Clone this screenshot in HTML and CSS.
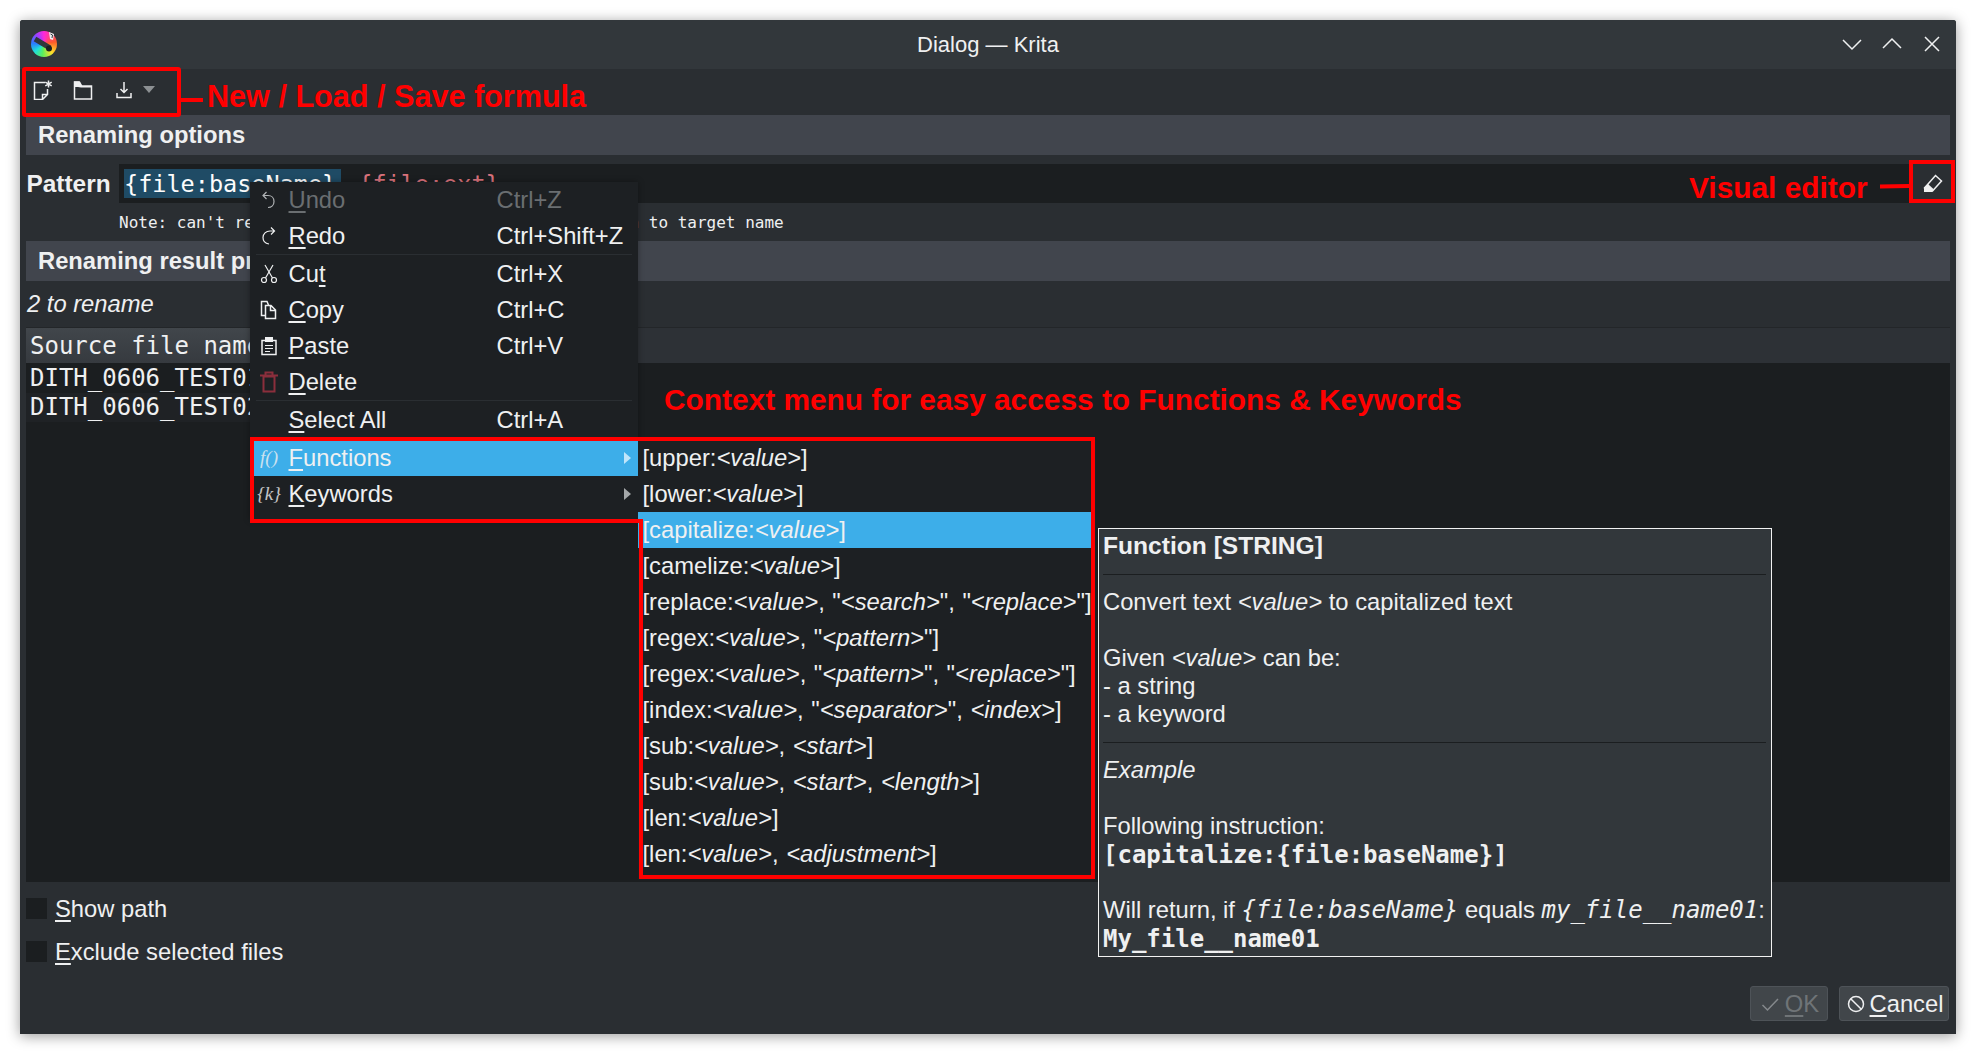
FILE: index.html
```html
<!DOCTYPE html>
<html lang="en">
<head>
    <meta charset="UTF-8">
    <title>Dialog — Krita</title>
    <link rel="stylesheet" href="styles.css">
</head>
<body>
    <div class="window">
        <div class="titlebar">
            <div class="logo">
                <svg width="26" height="26" viewBox="0 0 26 26"><path d="M4 8l15 9" stroke="#31363b" stroke-width="5" fill="none"/><circle cx="18" cy="17.500" r="3" fill="#1b1e20"/><path d="M18 1l5 2-1 6-3-1z" fill="#eff0f1"/><path d="M19.500 3l2 1-.5 3" stroke="#31363b" fill="none"/></svg>
            </div>
            <div class="title">Dialog — Krita</div>
            <div class="win-buttons">
                <svg width="20" height="20" viewBox="0 0 20 20"><path d="M1 6l9 9 9-9" class="win-icon"/></svg>
                <svg width="20" height="20" viewBox="0 0 20 20"><path d="M1 14l9-9 9 9" class="win-icon"/></svg>
                <svg width="20" height="20" viewBox="0 0 20 20"><path d="M3 3l14 14M17 3L3 17" class="win-icon"/></svg>
            </div>
        </div>

        <div class="toolbar">
            <svg class="tool-new" width="20" height="20" viewBox="0 0 20 20"><path d="M12 2.500H1.500v17h8l5-5V9M9.500 19.500v-5h5" class="tool-icon"/><path d="M15.500 0.500v7M12.300 2.200l6.400 3.600M18.700 2.200l-6.400 3.600" class="tool-icon"/></svg>
            <svg class="tool-open" width="20" height="20" viewBox="0 0 20 20"><path d="M1.500 2v17h17V6H8L6 2z" class="tool-icon"/><path d="M1 1.500h6l2.500 4.500 9.500 0v1.500H8L5 7H1z" fill="#eff0f1"/></svg>
            <svg class="tool-save" width="16" height="18" viewBox="0 0 16 18"><path d="M8 1v10M4.500 8l3.500 3.500L11.500 8M1 12v4.500h14V12" class="tool-icon"/></svg>
            <span class="tool-caret"></span>
        </div>

        <div class="section">Renaming options</div>

        <div class="pattern-row">
            <span class="pattern-label">Pattern</span>
            <div class="pattern-field">
                <span class="pattern-selected">{file:baseName}</span>
                <span class="pattern-ext">{file:ext}</span>
            </div>
            <div class="pattern-button">
                <svg width="20" height="20" viewBox="0 0 20 20"><path d="M12.500 1.500l6 5.500-9 10H4.500L1.500 14z" class="tool-icon"/><path d="M1 13.500l4-3.500 6 5.500L9 18H1z" fill="#eff0f1"/></svg>
            </div>
        </div>
        <div class="note">Note: can't rename files, extension is not added again to target name</div>

        <div class="section">Renaming result preview</div>
        <div class="count">2 to rename</div>

        <div class="list">
            <div class="list-head"><span class="list-col">Source file name</span></div>
            <div class="list-row">DITH_0606_TEST01.kra</div>
            <div class="list-row">DITH_0606_TEST02.kra</div>
        </div>

        <label class="check"><span class="check-box"></span><span><u>S</u>how path</span></label>
        <label class="check"><span class="check-box"></span><span><u>E</u>xclude selected files</span></label>

        <div class="footer">
            <div class="btn btn-disabled">
                <svg width="18" height="18" viewBox="0 0 18 18"><path d="M1.500 10l5 5L17 4" class="btn-icon"/></svg>
                <span><u>O</u>K</span>
            </div>
            <div class="btn btn-cancel">
                <svg width="18" height="18" viewBox="0 0 18 18"><circle cx="9" cy="9" r="7.500" class="btn-icon"/><path d="M3.700 3.700l10.600 10.600" class="btn-icon"/></svg>
                <span><u>C</u>ancel</span>
            </div>
        </div>
    </div>

    <!-- context menu -->
    <div class="menu">
        <div class="menu-item menu-disabled">
            <svg width="18" height="20" viewBox="0 0 18 20"><path d="M6.500 2L3 5.500 6.500 9M3 5.500h5c3.500 0 6 2.500 6 6s-2.500 6-6 6" class="menu-icon"/></svg>
            <span><u>U</u>ndo</span><span>Ctrl+Z</span>
        </div>
        <div class="menu-item">
            <svg width="18" height="20" viewBox="0 0 18 20"><path d="M11 1.500L14.500 5 11 8.500M14.500 5H10C6 5 3 8 3 11.500s2.500 6 6 6.500" class="menu-icon"/></svg>
            <span><u>R</u>edo</span><span>Ctrl+Shift+Z</span>
        </div>
        <div class="menu-sep"></div>
        <div class="menu-item">
            <svg width="18" height="20" viewBox="0 0 18 20"><path d="M5 1l7.500 13M13 1L5.500 14" class="menu-icon"/><circle cx="4" cy="16" r="2.500" class="menu-icon"/><circle cx="14" cy="16" r="2.500" class="menu-icon"/></svg>
            <span>Cu<u>t</u></span><span>Ctrl+X</span>
        </div>
        <div class="menu-item">
            <svg width="18" height="20" viewBox="0 0 18 20"><path d="M5.500 15.500h-4V1.500h5.500l1.500 3.500" class="menu-icon menu-icon-solid"/><path d="M5.500 5.500H11l4.500 4.500v8.500H5.500zM10.500 5.500V10.500h5" class="menu-icon menu-icon-solid"/></svg>
            <span><u>C</u>opy</span><span>Ctrl+C</span>
        </div>
        <div class="menu-item">
            <svg width="18" height="20" viewBox="0 0 18 20"><path d="M2 4.500h14v14H2z" class="menu-icon menu-icon-solid"/><path d="M5 1h8v5H5z" fill="#eff0f1"/><path d="M5 9.500h8M5 12.500h8M5 15.500h5" class="menu-icon"/></svg>
            <span><u>P</u>aste</span><span>Ctrl+V</span>
        </div>
        <div class="menu-item">
            <svg width="18" height="22" viewBox="0 0 18 22"><path d="M3.500 5.500h11v15h-11zM0 4.500h18M5.500 4.500v-3h7v3" class="menu-icon menu-icon-danger"/></svg>
            <span><u>D</u>elete</span><span></span>
        </div>
        <div class="menu-sep"></div>
        <div class="menu-item">
            <span></span><span><u>S</u>elect All</span><span>Ctrl+A</span>
        </div>
        <div class="menu-sep"></div>
        <div class="menu-item menu-active">
            <span class="menu-glyph">f()</span><span><u>F</u>unctions</span><span></span>
            <span class="menu-arrow"></span>
        </div>
        <div class="menu-item">
            <span class="menu-glyph">{k}</span><span><u>K</u>eywords</span><span></span>
            <span class="menu-arrow"></span>
        </div>
    </div>

    <!-- functions submenu -->
    <div class="submenu">
        <div class="sub-item">[upper:<i>&lt;value&gt;</i>]</div>
        <div class="sub-item">[lower:<i>&lt;value&gt;</i>]</div>
        <div class="sub-item sub-active">[capitalize:<i>&lt;value&gt;</i>]</div>
        <div class="sub-item">[camelize:<i>&lt;value&gt;</i>]</div>
        <div class="sub-item">[replace:<i>&lt;value&gt;</i>, "<i>&lt;search&gt;</i>", "<i>&lt;replace&gt;</i>"]</div>
        <div class="sub-item">[regex:<i>&lt;value&gt;</i>, "<i>&lt;pattern&gt;</i>"]</div>
        <div class="sub-item">[regex:<i>&lt;value&gt;</i>, "<i>&lt;pattern&gt;</i>", "<i>&lt;replace&gt;</i>"]</div>
        <div class="sub-item">[index:<i>&lt;value&gt;</i>, "<i>&lt;separator&gt;</i>", <i>&lt;index&gt;</i>]</div>
        <div class="sub-item">[sub:<i>&lt;value&gt;</i>, <i>&lt;start&gt;</i>]</div>
        <div class="sub-item">[sub:<i>&lt;value&gt;</i>, <i>&lt;start&gt;</i>, <i>&lt;length&gt;</i>]</div>
        <div class="sub-item">[len:<i>&lt;value&gt;</i>]</div>
        <div class="sub-item">[len:<i>&lt;value&gt;</i>, <i>&lt;adjustment&gt;</i>]</div>
    </div>

    <!-- tooltip -->
    <div class="tip">
        <div class="tip-title">Function [STRING]</div>
        <div class="tip-sep"></div>
        <p>Convert text <i>&lt;value&gt;</i> to capitalized text</p>
        <p class="tip-gap">Given <i>&lt;value&gt;</i> can be:</p>
        <p>- a string</p>
        <p>- a keyword</p>
        <div class="tip-sep"></div>
        <p><i>Example</i></p>
        <p class="tip-gap">Following instruction:</p>
        <p class="tip-code">[capitalize:{file:baseName}]</p>
        <p class="tip-gap">Will return, if <i class="tip-mono">{file:baseName}</i> equals <i class="tip-mono">my_file__name01</i>:</p>
        <p class="tip-code">My_file__name01</p>
    </div>

    <!-- red annotations -->
    <svg class="marks" width="1976" height="1054" viewBox="0 0 1976 1054">
        <g class="mark-lines">
            <rect x="24" y="69" width="155" height="46" rx="1"/>
            <path d="M181 100h22"/>
            <rect x="1911" y="162" width="42" height="39"/>
            <path d="M1880 186.500l29-.5"/>
            <path d="M252 523V439H1093V877H641V521H252"/>
        </g>
    </svg>
    <div class="note-red note-formula">New / Load / Save formula</div>
    <div class="note-red note-editor">Visual editor</div>
    <div class="note-red note-context">Context menu for easy access to Functions &amp; Keywords</div>
</body>
</html>
```

FILE: styles.css
```css
* {
    margin: 0;
    padding: 0;
    box-sizing: border-box;
}

body {
    font-family: "Liberation Sans", Arial, sans-serif;
    font-size: 23.75px;
    color: #eff0f1;
    background: #fff;
    padding: 20px;
    height: 1054px;
    overflow: hidden;
}

u {
    text-underline-offset: 3px;
    text-decoration-thickness: 2px;
}

.window {
    display: flex;
    flex-direction: column;
    height: 1014px;
    background: #2a2e32;
    border-radius: 3px 3px 0 0;
    box-shadow: 0 2px 14px rgba(0, 0, 0, 0.4);
}

.titlebar {
    position: relative;
    display: flex;
    align-items: center;
    justify-content: center;
    height: 49px;
    flex-shrink: 0;
    background: #32373b;
    border-radius: 3px 3px 0 0;
}

.logo {
    position: absolute;
    left: 11px;
    top: 11px;
    width: 26px;
    height: 26px;
    border-radius: 50%;
    background: conic-gradient(#ff28d8, #ff5a2a 22%, #ffe02a 38%, #5cf05a 52%, #20e0d8 64%, #2b7cff 76%, #a03cff 90%, #ff28d8);
}

.title {
    font-size: 22px;
}

.win-buttons {
    position: absolute;
    right: 14px;
    top: 14px;
    display: flex;
    gap: 20px;
}

.win-icon {
    fill: none;
    stroke: #eff0f1;
    stroke-width: 1.5;
}

.toolbar {
    display: flex;
    align-items: center;
    height: 46px;
    flex-shrink: 0;
    padding: 0 0 5px 13px;
}

.tool-icon {
    fill: none;
    stroke: #eff0f1;
    stroke-width: 1.5;
}

.tool-open {
    margin-left: 20px;
}

.tool-save {
    margin-left: 23px;
}

.tool-caret {
    margin-left: 11px;
    border-style: solid;
    border-width: 7px 6px 0 6px;
    border-color: #8c9093 transparent transparent transparent;
}

.section {
    display: flex;
    align-items: center;
    height: 40px;
    flex-shrink: 0;
    margin: 0 6px;
    padding-left: 12px;
    background: #41454d;
    font-weight: 700;
}

.pattern-row {
    display: flex;
    align-items: center;
    height: 39px;
    flex-shrink: 0;
    margin-top: 9px;
    padding-left: 6.500px;
}

.pattern-label {
    width: 92.500px;
    flex-shrink: 0;
    font-size: 24.4px;
    font-weight: 700;
}

.pattern-field {
    display: flex;
    align-items: center;
    flex: 1;
    height: 100%;
    padding-left: 5px;
    background: #1b1e20;
    font-family: "DejaVu Sans Mono", monospace;
    font-size: 23.5px;
}

.pattern-selected {
    display: flex;
    align-items: center;
    height: 29px;
    padding-right: 5px;
    background: #1f4b65;
    color: #fcfcfc;
}

.pattern-ext {
    margin-left: 17px;
    color: #d9727c;
}

.pattern-button {
    display: flex;
    align-items: center;
    justify-content: center;
    width: 47px;
    height: 100%;
    flex-shrink: 0;
}

.note {
    display: flex;
    align-items: center;
    height: 38px;
    flex-shrink: 0;
    padding-left: 99px;
    font-family: "DejaVu Sans Mono", monospace;
    font-size: 16px;
    white-space: nowrap;
}

.count {
    display: flex;
    align-items: center;
    height: 46px;
    flex-shrink: 0;
    padding-left: 7px;
    font-style: italic;
}

.list {
    height: 555px;
    flex-shrink: 0;
    margin: 0 6px;
    background: #1b1e20;
    font-family: "DejaVu Sans Mono", monospace;
    font-size: 24px;
}

.list-head {
    display: flex;
    height: 36px;
    background: #2d3136;
    border-top: 1px solid #232629;
}

.list-col {
    display: flex;
    align-items: center;
    width: 320px;
    padding-left: 4px;
    background: linear-gradient(#41464b, #363a3f);
}

.list-row {
    display: flex;
    align-items: center;
    width: 320px;
    height: 29.5px;
    padding-left: 4px;
    white-space: nowrap;
}

.list-row:nth-child(3) {
    background: #1f2225;
}

.check {
    display: flex;
    align-items: center;
    gap: 8px;
    height: 43px;
    flex-shrink: 0;
    padding-left: 6px;
}

.list + .check {
    margin-top: 5px;
}

.check-box {
    width: 21px;
    height: 21px;
    background: #1b1e20;
}

.footer {
    display: flex;
    justify-content: flex-end;
    gap: 11px;
    margin-top: auto;
    padding: 0 7px 13px 0;
}

.btn {
    display: flex;
    align-items: center;
    justify-content: center;
    gap: 6px;
    height: 35px;
    background: #41464a;
    border: 1px solid #4e5358;
    border-radius: 3px;
}

.btn-disabled {
    width: 78px;
    padding-left: 2px;
    color: #6f7477;
}

.btn-cancel {
    width: 110px;
    padding-left: 2px;
    gap: 5px;
}

.btn-disabled .btn-icon {
    stroke: #85898c;
}

.btn-icon {
    fill: none;
    stroke: #eff0f1;
    stroke-width: 1.5;
}

.menu {
    position: absolute;
    left: 250px;
    top: 182px;
    width: 388px;
    height: 338px;
    background: #1d2023;
    box-shadow: 0 0 6px rgba(0, 0, 0, 0.35);
}

.menu-item {
    position: relative;
    display: grid;
    grid-template-columns: 39px 208px 1fr;
    align-items: center;
    height: 36px;
    margin-left: -0.5px;
}

.menu-item > svg {
    justify-self: center;
}

.menu-disabled {
    color: #6a6e71;
}

.menu-active {
    background: #3daee9;
}

.menu-sep {
    height: 2px;
    margin: 0 6px;
    border-top: 1px solid #2a2e32;
}

.menu-icon {
    fill: none;
    stroke: #eff0f1;
    stroke-width: 1.2;
}

.menu-icon-solid {
    stroke-width: 1.5;
}

.menu-disabled .menu-icon {
    stroke: #b0b3b5;
}

.menu-icon-danger {
    stroke: #8b2e3c;
    stroke-width: 2;
}

.menu-glyph {
    justify-self: center;
    font-family: "Liberation Serif", serif;
    font-size: 19px;
    font-style: italic;
    opacity: 0.8;
}

.menu-arrow {
    position: absolute;
    right: 7px;
    top: 12px;
    border-style: solid;
    border-width: 6px 0 6px 7px;
    border-color: transparent transparent transparent #a4a7a9;
}

.menu-active .menu-arrow {
    border-left-color: #bfe5fa;
}

.submenu {
    position: absolute;
    left: 638px;
    top: 440px;
    width: 458px;
    height: 440px;
    background: #1d2023;
    white-space: nowrap;
}

.sub-item {
    display: flex;
    align-items: center;
    white-space: pre;
    word-spacing: 1px;
    height: 36px;
    padding-left: 4.500px;
    margin-right: 5px;
}

.sub-active {
    background: #3daee9;
}

.tip {
    position: absolute;
    left: 1098px;
    top: 528px;
    width: 674px;
    height: 429px;
    padding: 3px 5px 0 4px;
    background: #32373b;
    border: 1px solid #f2f2f2;
    line-height: 28px;
    white-space: nowrap;
}

.tip-title {
    font-size: 24.6px;
    font-weight: 700;
}

.tip-sep {
    height: 1px;
    margin: 14px 0 13px;
    background: #1b1e20;
}

.tip-gap {
    margin-top: 28px;
}

.tip-code {
    padding-top: 1px;
    margin-bottom: -1px;
    font-family: "DejaVu Sans Mono", monospace;
    font-size: 24px;
    font-weight: 700;
}

.tip-mono {
    font-family: "DejaVu Sans Mono", monospace;
    font-size: 24px;
}

.marks {
    position: absolute;
    left: 0;
    top: 0;
    pointer-events: none;
}

.mark-lines {
    fill: none;
    stroke: #f00;
    stroke-width: 4;
}

.note-red {
    position: absolute;
    color: #f00;
    font-size: 29.85px;
    font-weight: 700;
    line-height: 34px;
    white-space: nowrap;
}

.note-formula {
    left: 207px;
    top: 79px;
    font-size: 30.6px;
}

.note-editor {
    left: 1689px;
    top: 171px;
}

.note-context {
    left: 664px;
    top: 383px;
}
```
